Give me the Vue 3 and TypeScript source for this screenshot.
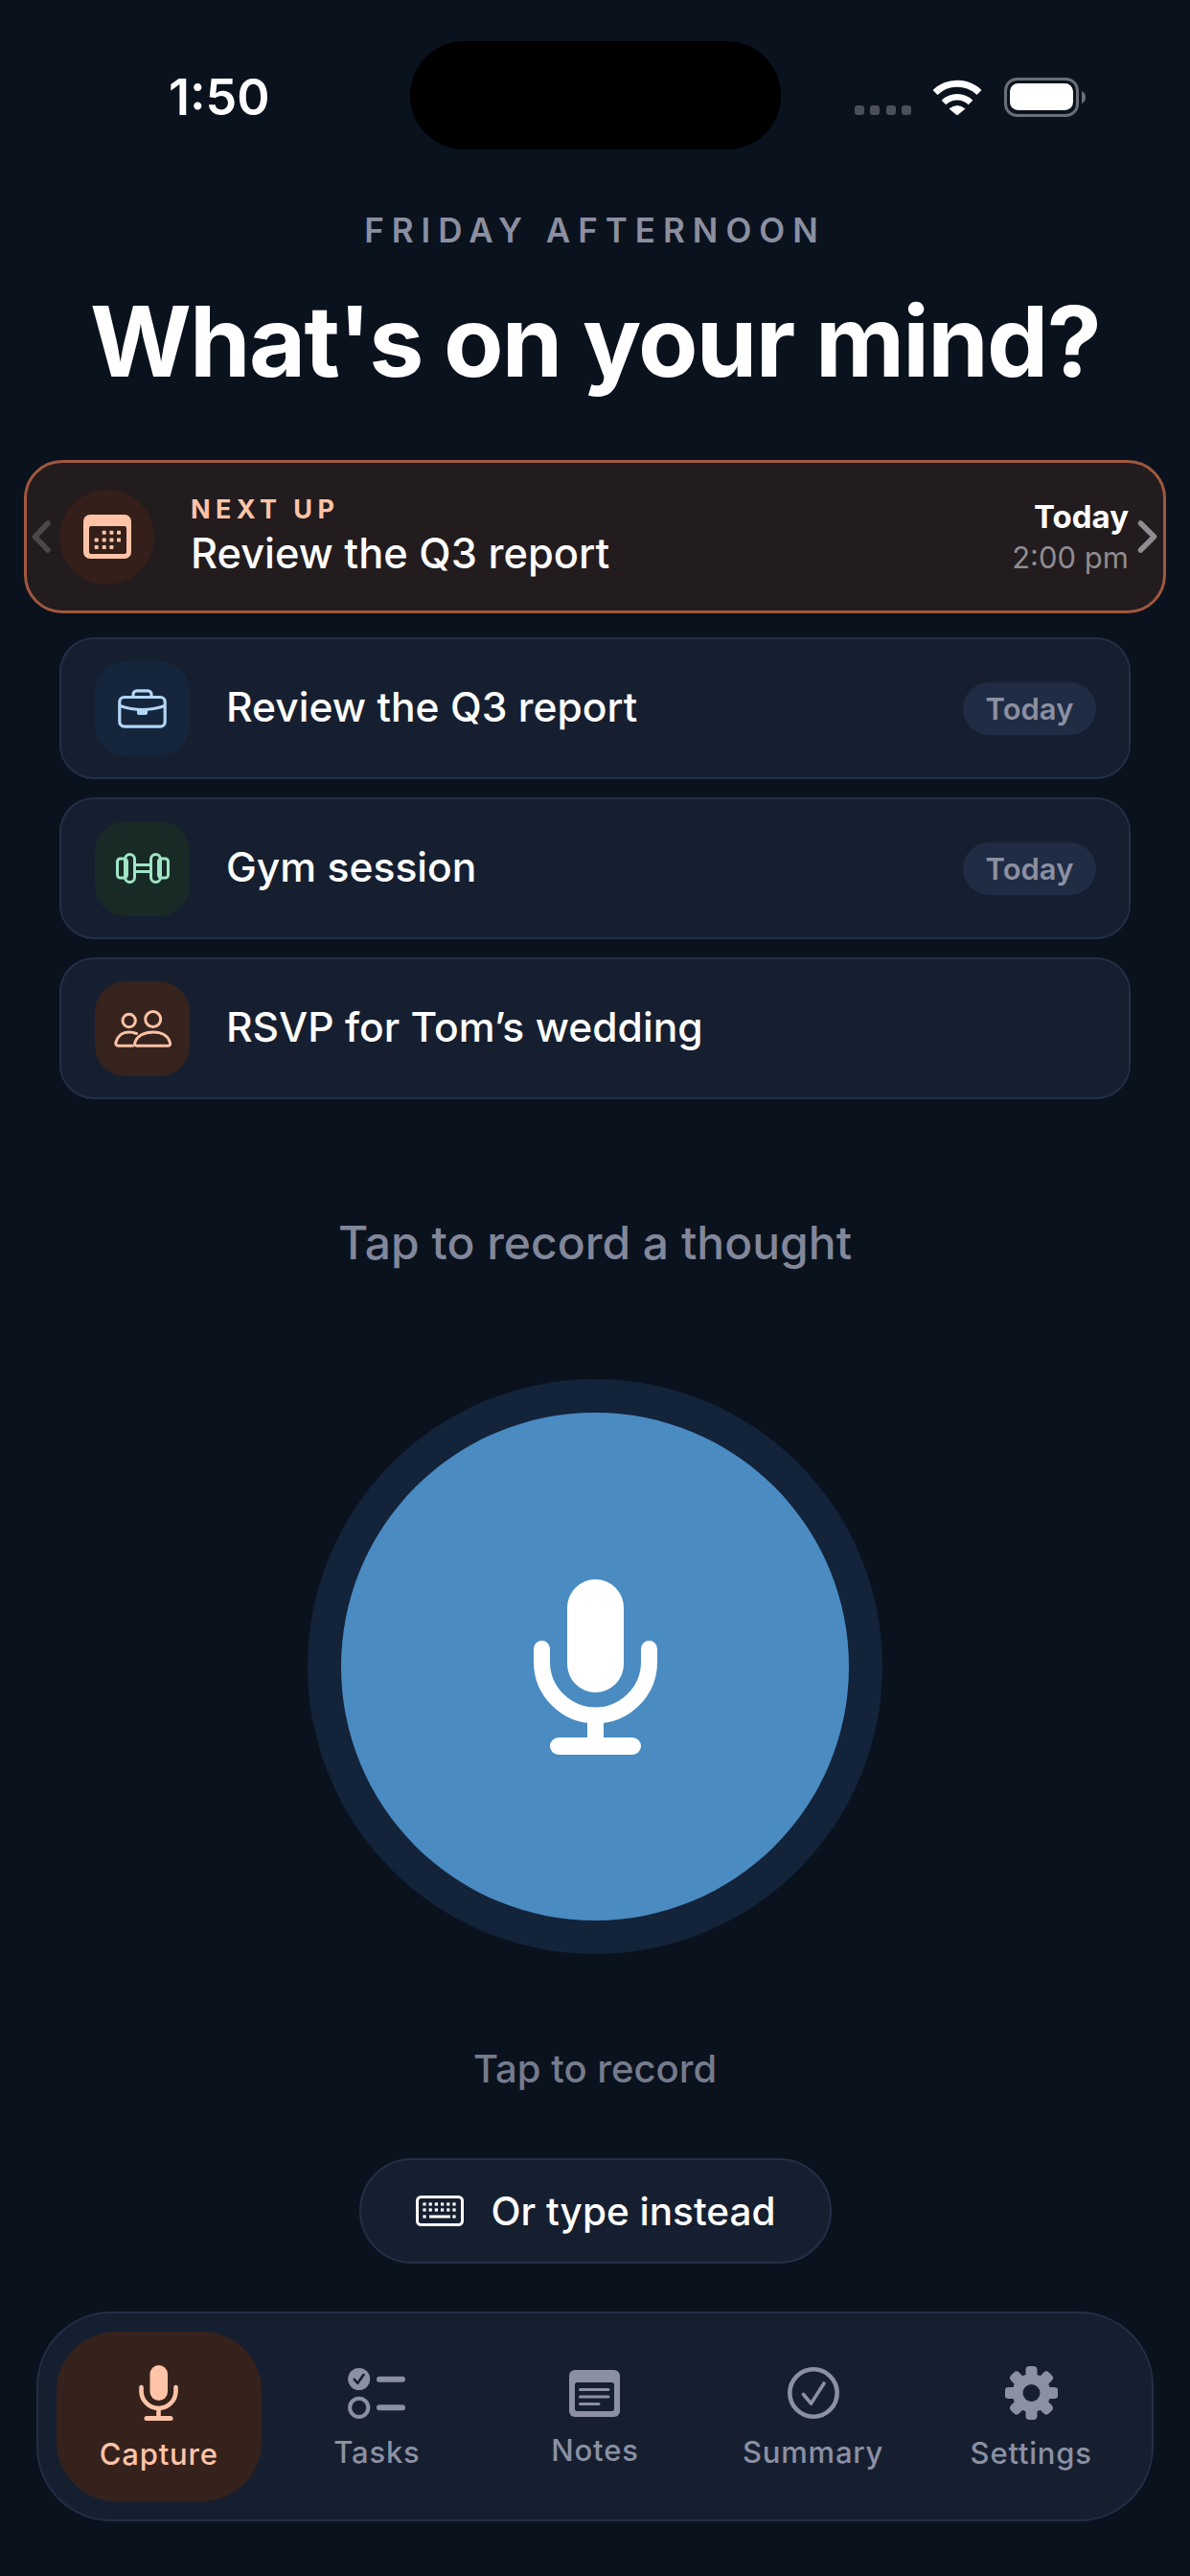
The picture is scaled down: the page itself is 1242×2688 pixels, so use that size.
<script setup lang="ts">
const tasks = [
  { title: "Review the Q3 report", badge: "Today", kind: "work" },
  { title: "Gym session", badge: "Today", kind: "gym" },
  { title: "RSVP for Tom’s wedding", badge: "", kind: "people" },
];

const tabs = [
  { label: "Capture", icon: "mic", active: true },
  { label: "Tasks", icon: "tasks", active: false },
  { label: "Notes", icon: "notes", active: false },
  { label: "Summary", icon: "summary", active: false },
  { label: "Settings", icon: "settings", active: false },
];

const calendarDots = [
  [21.7, 18.7], [29.4, 18.7], [37, 18.7],
  [13.7, 26.5], [21.7, 26.5], [29.4, 26.5], [37, 26.5],
  [13.7, 34], [21.7, 34], [29.4, 34],
];

const keyDots: number[][] = [];
for (const y of [9, 15]) {
  for (let i = 0; i < 6; i++) keyDots.push([9 + i * 6.2, y]);
}
keyDots.push([9, 22], [40, 22]);

const gearTeeth = [0, 45, 90, 135];
</script>

<template>
  <div class="screen">
    <header class="status">
      <div class="status-left"><span class="time">1:50</span></div>
      <div class="island"></div>
      <div class="status-right">
        <div class="signal"><i></i><i></i><i></i><i></i></div>
        <svg class="wifi" width="52" height="37" viewBox="0 0 52 37" fill="none">
          <path d="M3 13.5A33 33 0 0 1 49 13.5" stroke="#fff" stroke-width="7" />
          <path d="M12 24A20 20 0 0 1 40 24" stroke="#fff" stroke-width="6.5" />
          <path d="M17.5 30.5Q26 23.5 34.5 30.5L26 37.5Z" fill="#fff" />
        </svg>
        <svg class="battery" width="85" height="41" viewBox="0 0 85 41" fill="none">
          <rect x="1.5" y="1.5" width="75" height="38" rx="12" stroke="#6b6f79" stroke-width="3" />
          <rect x="6" y="6" width="66" height="28" rx="8.5" fill="#fff" />
          <path d="M81 14C83.5 15 85 17.5 85 20.5S83.5 26 81 27Z" fill="#6b6f79" />
        </svg>
      </div>
    </header>

    <p class="eyebrow">FRIDAY AFTERNOON</p>
    <h1 class="title">What's on your mind?</h1>

    <section class="next-card">
      <svg class="chev" width="20" height="34" viewBox="0 0 20 34" fill="none">
        <path d="M17 3L3.5 17L17 31" stroke="#4a4749" stroke-width="5.5" stroke-linecap="round" stroke-linejoin="round" />
      </svg>
      <div class="next-icon">
        <svg width="50" height="46" viewBox="0 0 50 46">
          <rect width="50" height="46" rx="7" fill="#ffc4a8" />
          <rect x="6" y="12" width="39" height="29" rx="2" fill="#341f1a" />
          <rect v-for="(d, i) in calendarDots" :key="i" :x="d[0] - 2" :y="d[1] - 2" width="4" height="4" rx="0.8" fill="#ffc4a8" />
        </svg>
      </div>
      <div class="next-text">
        <span class="next-label">NEXT UP</span>
        <span class="next-title">Review the Q3 report</span>
      </div>
      <div class="next-when">
        <span class="when-day">Today</span>
        <span class="when-time">2:00 pm</span>
      </div>
      <svg class="chev" width="21" height="34" viewBox="0 0 21 34" fill="none">
        <path d="M3.5 3L17.5 17L3.5 31" stroke="#8f8c92" stroke-width="5.5" stroke-linecap="round" stroke-linejoin="round" />
      </svg>
    </section>

    <ul class="task-list">
      <li v-for="t in tasks" :key="t.title" class="task">
        <div class="task-icon" :class="t.kind">
          <svg v-if="t.kind === 'work'" width="51" height="41" viewBox="0 0 51 41" fill="none" stroke="#b3d6f8" stroke-width="3.2">
            <rect x="1.8" y="8.5" width="47.4" height="30.7" rx="5" />
            <path d="M16 8V5.5A3.7 3.7 0 0 1 19.7 1.8H31.3A3.7 3.7 0 0 1 35 5.5V8" />
            <path d="M2 17.5Q25.5 25.5 49 17.5" />
            <path d="M20 21.5H31V25A2 2 0 0 1 29 27H22A2 2 0 0 1 20 25Z" fill="#b3d6f8" stroke="none" />
          </svg>
          <svg v-else-if="t.kind === 'gym'" width="56" height="32" viewBox="0 0 56 32" fill="none" stroke="#a1e5c6" stroke-width="3">
            <rect x="1.5" y="6" width="10" height="20" rx="3" />
            <rect x="44.5" y="6" width="10" height="20" rx="3" />
            <rect x="9.5" y="1.5" width="10" height="29" rx="5" />
            <rect x="36.5" y="1.5" width="10" height="29" rx="5" />
            <path d="M19.5 12.5H36.5M19.5 19.5H36.5" />
          </svg>
          <svg v-else width="60" height="39" viewBox="0 0 60 39" fill="none" stroke="#fcc2a5" stroke-width="3">
            <circle cx="40.7" cy="9.5" r="8" />
            <circle cx="15.7" cy="11" r="6.7" />
            <path d="M23.5 37.2C21.5 37.2 21.2 35.5 22 33.5C24 27 31.5 23 40.7 23C50 23 56.5 27 58.3 33.5C59 35.5 58.5 37.2 56.5 37.2Z" stroke-linejoin="round" />
            <path d="M23.5 24.5C21 23.5 18.5 23 15.7 23C9 23 3.8 27 2 33.5C1.4 35.8 2.4 37.2 4.5 37.2H19.5" stroke-linecap="round" />
          </svg>
        </div>
        <span class="task-title">{{ t.title }}</span>
        <span v-if="t.badge" class="badge">{{ t.badge }}</span>
      </li>
    </ul>

    <p class="prompt">Tap to record a thought</p>

    <div class="record-ring">
      <button class="record-btn" type="button" aria-label="Record">
        <svg width="129" height="183" viewBox="0 0 129 183" fill="none" stroke="#fff">
          <rect x="35" y="0" width="59" height="118" rx="29.5" fill="#fff" stroke="none" />
          <path d="M8.5 72.5V86A56 56 0 0 0 120.5 86V72.5" stroke-width="17" stroke-linecap="round" />
          <path d="M64.5 142V174" stroke-width="17" />
          <path d="M26 174H103" stroke-width="18" stroke-linecap="round" />
        </svg>
      </button>
    </div>

    <p class="caption">Tap to record</p>

    <button class="type-btn" type="button">
      <svg width="50" height="32" viewBox="0 0 50 32" fill="none">
        <rect x="1.5" y="1.5" width="47" height="29" rx="4" stroke="#fff" stroke-width="3" />
        <rect v-for="(d, i) in keyDots" :key="i" :x="d[0] - 1.6" :y="d[1] - 1.6" width="3.2" height="3.2" fill="#fff" />
        <rect x="14" y="20.5" width="22" height="3" fill="#fff" />
      </svg>
      <span>Or type instead</span>
    </button>

    <nav class="tabbar">
      <div v-for="tab in tabs" :key="tab.label" class="tab" :class="{ active: tab.active }">
        <svg v-if="tab.icon === 'mic'" width="42" height="58" viewBox="0 0 42 58" fill="none" stroke="#ffc4a8">
          <rect x="11.5" y="0" width="18.5" height="37" rx="9.25" fill="#ffc4a8" stroke="none" />
          <path d="M2.5 23V27A18 18 0 0 0 38.5 27V23" stroke-width="4.6" stroke-linecap="round" />
          <path d="M20.5 45V55" stroke-width="4.6" />
          <path d="M8 55.5H33" stroke-width="5" stroke-linecap="round" />
        </svg>
        <svg v-else-if="tab.icon === 'tasks'" width="60" height="53" viewBox="0 0 60 53" fill="none">
          <circle cx="11.7" cy="11.5" r="11.5" fill="#8b90a3" />
          <path d="M6.8 11.8L10.3 15.8L16.5 7" stroke="#161f30" stroke-width="2.6" stroke-linecap="round" stroke-linejoin="round" />
          <circle cx="11.7" cy="41.3" r="9.6" stroke="#8b90a3" stroke-width="4" />
          <path d="M33 11.7H57M33 41.3H57" stroke="#8b90a3" stroke-width="6" stroke-linecap="round" />
        </svg>
        <svg v-else-if="tab.icon === 'notes'" width="53" height="49" viewBox="0 0 53 49" fill="none">
          <rect width="53" height="49" rx="6" fill="#8b90a3" />
          <rect x="6" y="13" width="41" height="30" rx="2.5" fill="#161f30" />
          <path d="M11.5 20.5H41M11.5 28H41M11.5 35.5H31" stroke="#8b90a3" stroke-width="3" stroke-linecap="round" />
        </svg>
        <svg v-else-if="tab.icon === 'summary'" width="54" height="54" viewBox="0 0 54 54" fill="none">
          <circle cx="27" cy="27" r="24.7" stroke="#8b90a3" stroke-width="4.6" />
          <path d="M16.5 28.5L24.5 38L38 17" stroke="#8b90a3" stroke-width="3.6" stroke-linecap="round" stroke-linejoin="round" />
        </svg>
        <svg v-else width="55" height="56" viewBox="0 0 55 56">
          <g fill="#8b90a3">
            <rect v-for="deg in gearTeeth" :key="deg" x="21.5" y="0" width="12" height="56" rx="4" :transform="`rotate(${deg} 27.5 28)`" />
            <circle cx="27.5" cy="28" r="20" />
          </g>
          <circle cx="27.5" cy="28" r="9" fill="#161f30" />
        </svg>
        <span class="tab-label">{{ tab.label }}</span>
      </div>
    </nav>
  </div>
</template>

<style scoped>
.screen {
  width: 1242px;
  height: 2688px;
  overflow: hidden;
  background: #0a121e;
  color: #fff;
  font-family: Inter, "Noto Sans", sans-serif;
  display: flex;
  flex-direction: column;
}

.status {
  display: grid;
  grid-template-columns: 1fr 387px 1fr;
  align-items: center;
  margin-top: 43px;
  height: 113px;
}

.status-left {
  padding-left: 176px;
}

.time {
  font-size: 52px;
  font-weight: 600;
  line-height: 60px;
  display: block;
  margin-top: 4px;
}

.island {
  height: 113px;
  background: #000;
  border-radius: 56px;
}

.status-right {
  display: flex;
  align-items: flex-end;
  justify-content: flex-end;
  padding-right: 109px;
  height: 41px;
  margin-top: 4px;
}

.signal {
  display: flex;
  gap: 6.5px;
  margin-right: 22px;
  margin-bottom: 2px;
}

.signal i {
  width: 10px;
  height: 10px;
  border-radius: 3px;
  background: #4b4f59;
}

.wifi {
  margin-right: 23px;
  margin-bottom: 2px;
}

.eyebrow {
  margin: 64px 0 0;
  text-align: center;
  font-size: 35px;
  line-height: 40px;
  font-weight: 600;
  letter-spacing: 8px;
  color: #8b8fa0;
}

.title {
  margin: 36px 0 0;
  text-align: center;
  font-size: 102px;
  line-height: 120px;
  font-weight: 700;
  letter-spacing: -1.7px;
}

.next-card {
  display: flex;
  align-items: center;
  box-sizing: border-box;
  height: 160px;
  margin: 64px 25px 0;
  padding: 0 6px 0 5px;
  background: #221c1e;
  border: 3px solid #a0583e;
  border-radius: 40px;
}

.next-icon {
  width: 99px;
  height: 99px;
  margin-left: 9px;
  border-radius: 50%;
  background: #341f1a;
  display: flex;
  align-items: center;
  justify-content: center;
  flex-shrink: 0;
}

.next-text {
  display: flex;
  flex-direction: column;
  margin-left: 38px;
  flex: 1;
}

.next-label {
  font-size: 27px;
  line-height: 32px;
  font-weight: 700;
  letter-spacing: 5.4px;
  color: #ffc4a8;
}

.next-title {
  font-size: 43.4px;
  line-height: 54px;
  font-weight: 500;
  padding-top: 2px;
}

.next-when {
  display: flex;
  flex-direction: column;
  align-items: flex-end;
  margin-right: 9px;
}

.when-day {
  font-size: 33px;
  line-height: 42px;
  font-weight: 700;
}

.when-time {
  font-size: 31px;
  line-height: 40px;
  padding-top: 2px;
  color: #8f8c92;
}

.task-list {
  list-style: none;
  margin: 25px 62px 0;
  padding: 0;
  display: flex;
  flex-direction: column;
  gap: 19px;
}

.task {
  display: flex;
  align-items: center;
  box-sizing: border-box;
  height: 148px;
  padding: 0 34px 0 35px;
  background: #161f30;
  border: 2px solid #222f47;
  border-radius: 36px;
}

.task-icon {
  width: 99px;
  height: 99px;
  border-radius: 32px;
  display: flex;
  align-items: center;
  justify-content: center;
  flex-shrink: 0;
}

.task-icon.work {
  background: #15263c;
}

.task-icon.gym {
  background: #182a26;
}

.task-icon.people {
  background: #36231e;
}

.task-title {
  margin-left: 38px;
  padding-bottom: 3px;
  flex: 1;
  font-size: 42.6px;
  font-weight: 500;
}

.badge {
  width: 139px;
  height: 55px;
  border-radius: 28px;
  background: #1f2c43;
  color: #8b90a3;
  font-size: 31px;
  font-weight: 600;
  line-height: 55px;
  text-align: center;
}

.prompt {
  margin: 120px 0 0;
  text-align: center;
  font-size: 48px;
  line-height: 60px;
  font-weight: 500;
  color: #82879a;
}

.record-ring {
  width: 600px;
  height: 600px;
  margin: 112px auto 0;
  border-radius: 50%;
  background: #13233a;
  display: grid;
  place-items: center;
  flex-shrink: 0;
}

.record-btn {
  width: 530px;
  height: 530px;
  border: 0;
  padding: 0;
  border-radius: 50%;
  background: #4a8bc2;
  display: grid;
  place-items: center;
}

.caption {
  margin: 95px 0 0;
  text-align: center;
  font-size: 40px;
  line-height: 50px;
  font-weight: 500;
  color: #767b8c;
}

.type-btn {
  align-self: center;
  box-sizing: border-box;
  width: 493px;
  height: 110px;
  margin-top: 68px;
  padding: 0 0 0 2px;
  display: flex;
  align-items: center;
  justify-content: center;
  gap: 28px;
  background: #161f30;
  border: 2px solid #222f47;
  border-radius: 55px;
  color: #fff;
  font-family: inherit;
  font-size: 40.5px;
  font-weight: 500;
}

.tabbar {
  display: grid;
  grid-template-columns: repeat(5, 1fr);
  gap: 14px;
  box-sizing: border-box;
  height: 219px;
  margin: 50px 38px 0;
  padding: 19px;
  background: #161f30;
  border: 2px solid #222f47;
  border-radius: 78px;
}

.tab {
  display: flex;
  flex-direction: column;
  align-items: center;
  justify-content: center;
  gap: 11px;
  border-radius: 62px;
  color: #8b90a3;
}

.tab.active {
  background: #36221d;
  color: #ffc4a8;
}

.tab-label {
  margin-top: 5px;
  margin-bottom: -5px;
  font-size: 31px;
  line-height: 38px;
  font-weight: 500;
  letter-spacing: 0.8px;
}
</style>

<style>
html,
body {
  margin: 0;
  background: #0a121e;
}
</style>
